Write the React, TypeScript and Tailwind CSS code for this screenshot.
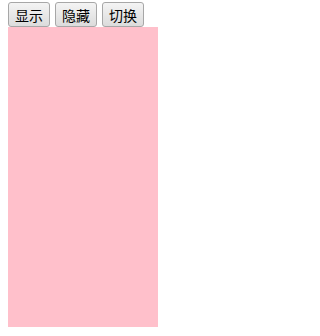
import React, { useState } from 'react'

const buttonClass =
    "h-[25px] w-[42px] border border-[#a7a7a7] rounded-[3px] bg-gradient-to-b from-[#f4f4f4] to-[#dcdcdc] text-[14px] leading-none text-black"

const App = () => {
    const [visible, setVisible] = useState(true)

    return (
        <div className="pl-2 pt-[2px]" style={{ fontFamily: '"Noto Sans CJK SC", "Noto Sans", sans-serif' }}>
            <div className="flex gap-[5px]">
                <button type="button" className={buttonClass} onClick={() => setVisible(true)}>显示</button>
                <button type="button" className={buttonClass} onClick={() => setVisible(false)}>隐藏</button>
                <button type="button" className={buttonClass} onClick={() => setVisible(!visible)}>切换</button>
            </div>
            <div className={visible ? "w-[150px] h-[300px] bg-[#ffc0cb]" : "hidden"}></div>
        </div>
    )
}

export default App
